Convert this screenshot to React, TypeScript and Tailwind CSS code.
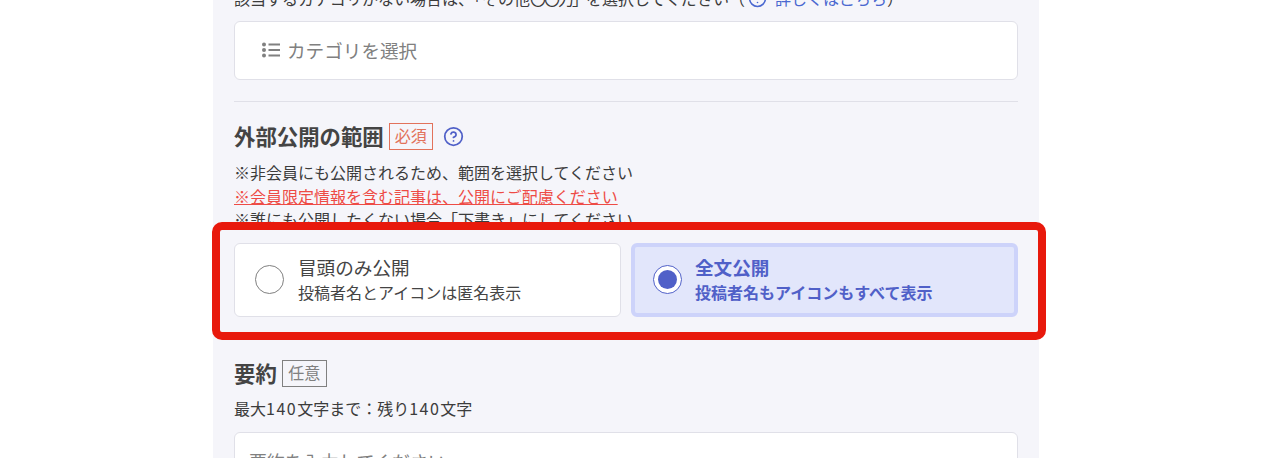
import { CircleHelp } from 'lucide-react';

const font = { fontFamily: '"Noto Sans CJK JP", "Noto Sans", sans-serif' };

function ListIcon() {
  return (
    <svg width="20" height="18" viewBox="0 0 20 18" className="shrink-0">
      <circle cx="3" cy="3.5" r="2" fill="#808080" />
      <circle cx="3" cy="9" r="2" fill="#808080" />
      <circle cx="3" cy="14.5" r="2" fill="#808080" />
      <path d="M7.5 3.5H19M7.5 9H19M7.5 14.5H19" stroke="#808080" strokeWidth="2.2" />
    </svg>
  );
}

export default function App() {
  return (
    <div className="h-[458px] w-[1272px] overflow-hidden bg-white text-[#3c3c3c]" style={font}>
      <div className="ml-[213px] w-[826px] bg-[#f5f5fa] px-[21px] -mt-[13px] pb-10">
        <p className="flex items-center h-[22px] text-[16px] leading-[22px] whitespace-nowrap">
          <span>
            該当するカテゴリがない場合は、「その他<span className="tracking-[-2px]">〇〇力」</span>を選択してください（
          </span>
          <CircleHelp size={19} strokeWidth={2} className="text-[#4a68d0] ml-[3px] mr-[8px]" />
          <span className="text-[#4a68d0]">詳しくはこちら</span>）
        </p>

        <div className="mt-[12px] h-[59px] rounded-md border border-[#e0e0e8] bg-white flex items-center gap-[6px] pl-[26px] pb-[2px] text-[18.6px] text-[#808080]">
          <ListIcon />
          <span>カテゴリを選択</span>
        </div>

        <div className="mt-[21px] border-t border-[#e0e0e8]" />

        <div className="mt-[21px] flex items-center h-[27px]">
          <h2 className="text-[21.4px] leading-[25px] pb-[2px] font-bold text-[#444]">外部公開の範囲</h2>
          <span className="ml-[5px] h-[27px] w-[44px] border border-[#e2725b] text-[#e2725b] text-[16px] leading-[23px] text-center">
            必須
          </span>
          <CircleHelp size={21} strokeWidth={2} className="ml-[10px] text-[#5060c8]" />
        </div>

        <div className="mt-[11px] text-[16px] leading-[23.5px] whitespace-nowrap">
          <p>※非会員にも公開されるため、範囲を選択してください</p>
          <p className="text-[#ee4b45] underline">※会員限定情報を含む記事は、公開にご配慮ください</p>
          <p>※誰にも公開したくない場合「下書き」にしてください</p>
        </div>

        <div className="relative mt-[11px] grid grid-cols-2 gap-[10px]">
          <div className="h-[74px] rounded-md border border-[#e0e0e8] bg-white flex items-center pl-[20px]">
            <span className="h-[29px] w-[29px] shrink-0 rounded-full border border-[#808080] bg-white" />
            <div className="ml-[14px] pb-[2px]">
              <p className="text-[18.6px] leading-[26px] text-[#444]">冒頭のみ公開</p>
              <p className="text-[16px] leading-[24px] text-[#444]">投稿者名とアイコンは匿名表示</p>
            </div>
          </div>
          <div className="h-[74px] rounded-md border-[4px] border-[#cdd3fa] bg-[#e2e6fb] flex items-center pl-[18px] text-[#5060c8] font-bold">
            <span className="h-[29px] w-[29px] shrink-0 rounded-full border border-[#5060c8] bg-white flex items-center justify-center">
              <span className="h-[19px] w-[19px] rounded-full bg-[#5060c8]" />
            </span>
            <div className="ml-[13px] pb-[2px]">
              <p className="text-[18.6px] leading-[26px]">全文公開</p>
              <p className="text-[16px] leading-[24px]">投稿者名もアイコンもすべて表示</p>
            </div>
          </div>
          {/* annotation frame drawn over the options */}
          <div className="absolute -top-[21px] -bottom-[23px] -left-[22px] -right-[28px] rounded-[10px] border-[8px] border-[#e8190c] pointer-events-none" />
        </div>

        <div className="mt-[43px] flex items-center h-[27px]">
          <h2 className="text-[21.4px] leading-[25px] pb-[2px] font-bold text-[#444]">要約</h2>
          <span className="ml-[5px] h-[27px] w-[45px] border border-[#808080] text-[#808080] text-[16px] leading-[23px] text-center">
            任意
          </span>
        </div>

        <p className="mt-[9px] text-[16px] leading-[24px] whitespace-nowrap">
          最大<span className="tracking-[1.5px]">140</span>文字まで：残り<span className="tracking-[1.5px]">140</span>文字
        </p>

        <div className="mt-[12px] h-[59px] rounded-md border border-[#e0e0e8] bg-white flex items-center pl-[14px] text-[18px] text-[#808080]">
          要約を入力してください
        </div>
      </div>
    </div>
  );
}
